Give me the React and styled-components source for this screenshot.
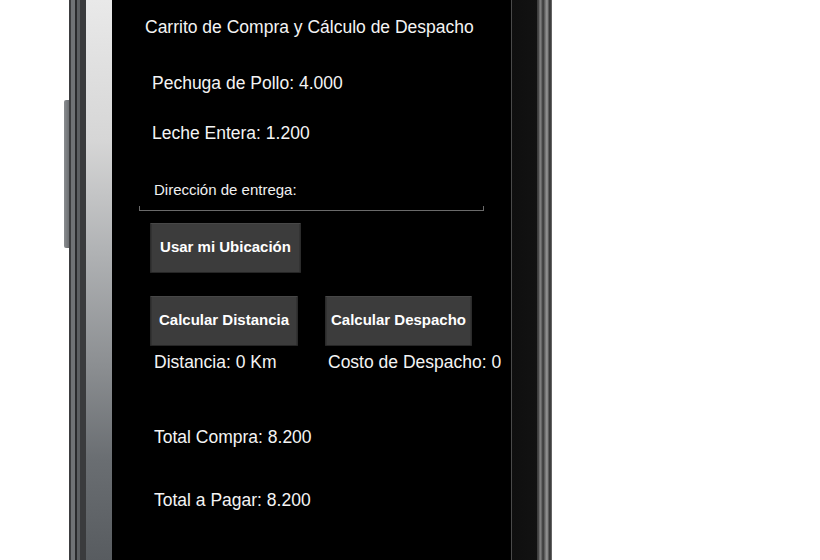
import React from "react";
import styled, { createGlobalStyle } from "styled-components";

const Global = createGlobalStyle`
  html, body { margin: 0; padding: 0; background: #ffffff; }
  body { font-family: "Liberation Sans", Arial, sans-serif; }
`;

const Page = styled.div`
  display: flex;
  height: 560px;
  width: 820px;
  overflow: hidden;
  padding-left: 64px;
  box-sizing: border-box;
`;

const SideRail = styled.div`
  width: 5px;
  display: flex;
  flex-direction: column;
`;

const SideButton = styled.div`
  margin-top: 100px;
  height: 148px;
  background: linear-gradient(to right, #8a8d90, #6c6f72);
  border-radius: 2px 0 0 2px;
`;

const LeftFrame = styled.div`
  width: 17px;
  background: linear-gradient(
    to right,
    #3c3d3f 0px, #3c3d3f 2px,
    #707376 2px, #707376 6px,
    #2a2b2d 6px, #2a2b2d 8px,
    #5c5f62 8px, #5c5f62 11px,
    #3a3b3d 11px, #3a3b3d 17px
  );
`;

const Silver = styled.div`
  width: 26px;
  background: linear-gradient(
    to bottom,
    #e9e9e9 0%,
    #d6d6d6 25%,
    #b0b2b4 45%,
    #8c8f92 65%,
    #6a6e72 82%,
    #585c60 100%
  );
`;

const Screen = styled.div`
  width: 399px;
  background: #000;
  border-right: 1px solid #4a4a4a;
  display: flex;
  flex-direction: column;
  color: #f4f4f4;
`;

const RightBezel = styled.div`
  width: 40px;
  background: linear-gradient(
    to right,
    #0f0f0f 0px, #121212 25px,
    #3a3a3a 25px, #4d4d4d 27px,
    #8a8a8a 28px, #5a5a5a 30px,
    #333 31px, #6c6c6c 33px,
    #9a9a9a 35px, #4a4a4a 37px,
    #2c2c2c 38px, #777 40px
  );
`;

const Text = styled.div`
  font-size: 17.5px;
  line-height: 21px;
  margin-top: ${(p) => p.top || 0}px;
  margin-left: ${(p) => p.left || 0}px;
  white-space: nowrap;
`;

const Field = styled.div`
  margin-top: 36px;
  margin-left: 27px;
  width: 345px;
  height: 31px;
  position: relative;
  box-sizing: border-box;
  border-bottom: 1px solid #6a6a6a;
  padding-left: 15px;
  padding-top: 1px;
  &::before, &::after {
    content: "";
    position: absolute;
    bottom: -1px;
    width: 1px;
    height: 5px;
    background: #6a6a6a;
  }
  &::before { left: 0; }
  &::after { right: 0; }
`;

const FieldLabel = styled.div`
  font-size: 15px;
  line-height: 17px;
  color: #f0f0f0;
`;

const Row = styled.div`
  display: flex;
  gap: ${(p) => p.gap || 0}px;
  margin-top: ${(p) => p.top || 0}px;
  margin-left: ${(p) => p.left || 0}px;
`;

const Button = styled.button`
  width: ${(p) => p.w}px;
  height: 50px;
  background: #3c3c3c;
  border: 1px solid #2b2b2b;
  border-top-color: #474747;
  border-bottom-color: #262626;
  border-radius: 1px;
  color: #ffffff;
  font-family: "Liberation Sans", Arial, sans-serif;
  font-weight: bold;
  font-size: 15px;
  padding: 0 0 3px;
  text-align: center;
  box-shadow: inset 1px 0 0 #333, inset -1px 0 0 #333;
`;

const Cell = styled.div`
  width: ${(p) => p.w}px;
  font-size: 17.5px;
  line-height: 21px;
  white-space: nowrap;
`;

export default function App() {
  return (
    <>
      <Global />
      <Page>
        <SideRail>
          <SideButton />
        </SideRail>
        <LeftFrame />
        <Silver />
        <Screen>
          <Text top={17} left={33}>Carrito de Compra y Cálculo de Despacho</Text>
          <Text top={35} left={40}>Pechuga de Pollo: 4.000</Text>
          <Text top={29} left={40}>Leche Entera: 1.200</Text>
          <Field>
            <FieldLabel>Dirección de entrega:</FieldLabel>
          </Field>
          <Row top={12} left={38}>
            <Button w={151}>Usar mi Ubicación</Button>
          </Row>
          <Row top={23} left={38} gap={27}>
            <Button w={148}>Calcular Distancia</Button>
            <Button w={147}>Calcular Despacho</Button>
          </Row>
          <Row top={6} left={42} gap={52}>
            <Cell w={122}>Distancia: 0 Km</Cell>
            <Cell w={180}>Costo de Despacho: 0</Cell>
          </Row>
          <Text top={54} left={42}>Total Compra: 8.200</Text>
          <Text top={42} left={42}>Total a Pagar: 8.200</Text>
        </Screen>
        <RightBezel />
      </Page>
    </>
  );
}
